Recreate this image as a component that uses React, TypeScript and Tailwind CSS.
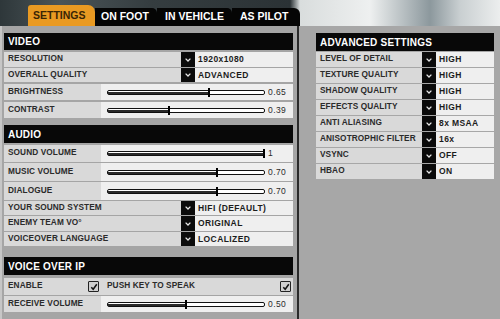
import React, { ReactElement } from 'react'

const labelText = "text-[8.25px] font-bold text-[#2b2b2b] tracking-[0.1px] whitespace-nowrap";
const valueText = "text-[8.5px] font-bold text-[#1c1c1c] tracking-[0.4px] whitespace-nowrap";

const Chevron = (): ReactElement => (
    <div className="flex w-[14px] shrink-0 items-center justify-center self-stretch bg-[#0b0b0b]">
        <svg width="6" height="4" viewBox="0 0 6 4">
            <path d="M0.6 0.6 L3 3 L5.4 0.6" fill="none" stroke="#e6e6e6" strokeWidth="1.3" />
        </svg>
    </div>
)

const Header = ({ title, h }: { title: string; h: string }): ReactElement => (
    <div className={`flex items-center bg-[#080808] pl-[4px] text-[10px] font-bold tracking-[0.2px] text-white ${h}`}>
        {title}
    </div>
)

interface SelectRowProps {
    label: string;
    value: string;
    h: string;
    labelW: string;
}

const SelectRow = ({ label, value, h, labelW }: SelectRowProps): ReactElement => (
    <div className={`flex ${h}`}>
        <div className={`flex items-center bg-[#d9d9d9] pl-[4px] ${labelW} ${labelText}`}>{label}</div>
        <Chevron />
        <div className={`flex flex-1 items-center bg-[#efefef] pl-[3px] ${valueText}`}>{value}</div>
    </div>
)

const SliderRow = ({ label, value, h }: { label: string; value: number; h: string }): ReactElement => {
    const pos = Math.round(value * 156);
    return (
        <div className={`flex ${h}`}>
            <div className={`flex w-[97px] items-center bg-[#d9d9d9] pl-[4px] ${labelText}`}>{label}</div>
            <div className="flex flex-1 items-center bg-[#efefef] pl-[6px]">
                {/* track */}
                <div className="relative h-[5px] w-[158px] rounded-[2px] border border-[#111] bg-white">
                    <div className="absolute left-0 top-[1px] h-[2px] bg-[#2a2a2a]" style={{ width: pos }} />
                    <div className="absolute top-[-3px] h-[9px] w-[2px] bg-black" style={{ left: pos - 1 }} />
                </div>
                <span className="ml-[3px] whitespace-nowrap text-[8.5px] tracking-[0.4px] text-[#2a2a2a]">
                    {value === 1 ? '1' : value.toFixed(2)}
                </span>
            </div>
        </div>
    )
}

const CheckBox = (): ReactElement => (
    <div className="flex h-[11px] w-[11px] items-center justify-center rounded-[1px] border border-[#222] bg-[#cfcfcf]">
        <svg width="8" height="8" viewBox="0 0 8 8">
            <path d="M1.3 4.2 L3.2 6.3 L6.8 1.2" fill="none" stroke="#111" strokeWidth="1.5" />
        </svg>
    </div>
)

const advanced: [string, string][] = [
    ['LEVEL OF DETAIL', 'HIGH'],
    ['TEXTURE QUALITY', 'HIGH'],
    ['SHADOW QUALITY', 'HIGH'],
    ['EFFECTS QUALITY', 'HIGH'],
    ['ANTI ALIASING', '8x MSAA'],
    ['ANISOTROPHIC FILTER', '16x'],
    ['VSYNC', 'OFF'],
    ['HBAO', 'ON'],
];

const App = (): ReactElement => {
    return <div className="relative h-[319px] w-[500px] overflow-hidden bg-[#a3a3a3] font-['Liberation_Sans',Arial,sans-serif]">
        {/* Top tabs */}
        <div className="flex h-[26px] items-end bg-[linear-gradient(90deg,#2e373a_0%,#4a5457_12%,#353d40_30%,#2b3235_58%,#d9dddd_60%,#eef0f0_74%,#8c989d_86%,#c9cfd1_92%,#eceeee_100%)] pl-[28px]">
            <div className="flex h-[21px] w-[67px] items-center rounded-t-[3px] rounded-tr-[7px] bg-[#e99a22] pl-[5px] text-[10.5px] font-bold text-[#3a2505]">
                SETTINGS
            </div>
            <div className="flex h-[18px] w-[62px] items-center rounded-tr-[5px] bg-[#050505] pl-[6px] text-[10.5px] font-bold text-white">
                ON FOOT
            </div>
            <div className="flex h-[18px] w-[75px] items-center rounded-tr-[5px] bg-[#050505] pl-[8px] text-[10.5px] font-bold text-white">
                IN VEHICLE
            </div>
            <div className="flex h-[18px] w-[68px] items-center rounded-tr-[6px] bg-[#050505] pl-[8px] text-[10.5px] font-bold text-white">
                AS PILOT
            </div>
        </div>

        <div className="flex h-[293px]">
            {/* Left panel */}
            <div className="flex w-[299px] flex-col border-l-[2px] border-r-[2px] border-l-[#c6c6c6] border-r-[#2a2a2a] bg-[#a5a5a5] pl-[2px] pr-[4px] pt-[7px]">
                {/* Video */}
                <Header title="VIDEO" h="h-[17px]" />
                <div className="mt-[2px] flex flex-col">
                    <SelectRow label="RESOLUTION" value="1920x1080" h="h-[15px]" labelW="w-[177px]" />
                    <div className="mt-[1px]">
                        <SelectRow label="OVERALL QUALITY" value="ADVANCED" h="h-[14px]" labelW="w-[177px]" />
                    </div>
                    <div className="mt-[2px]">
                        <SliderRow label="BRIGHTNESS" value={0.65} h="h-[16px]" />
                    </div>
                    <div className="mt-[2px]">
                        <SliderRow label="CONTRAST" value={0.39} h="h-[16px]" />
                    </div>
                </div>

                {/* Audio */}
                <div className="mt-[7px]">
                    <Header title="AUDIO" h="h-[18px]" />
                </div>
                <div className="mt-[2px] flex flex-col gap-[1px]">
                    <SliderRow label="SOUND VOLUME" value={1} h="h-[17px]" />
                    <SliderRow label="MUSIC VOLUME" value={0.7} h="h-[18px]" />
                    <SliderRow label="DIALOGUE" value={0.7} h="h-[18px]" />
                    <SelectRow label="YOUR SOUND SYSTEM" value="HIFI (DEFAULT)" h="h-[14px]" labelW="w-[177px]" />
                    <SelectRow label="ENEMY TEAM VO°" value="ORIGINAL" h="h-[15px]" labelW="w-[177px]" />
                    <SelectRow label="VOICEOVER LANGUAGE" value="LOCALIZED" h="h-[14px]" labelW="w-[177px]" />
                </div>

                {/* Voice over IP */}
                <div className="mt-[11px]">
                    <Header title="VOICE OVER IP" h="h-[18px]" />
                </div>
                <div className="mt-[3px] flex h-[17px] bg-[#d9d9d9]">
                    <div className={`flex w-[97px] items-center justify-between pl-[4px] pr-[2px] ${labelText}`}>
                        ENABLE
                        <CheckBox />
                    </div>
                    <div className={`flex flex-1 items-center justify-between pl-[6px] pr-[2px] ${labelText}`}>
                        PUSH KEY TO SPEAK
                        <CheckBox />
                    </div>
                </div>
                <div className="mt-[1px]">
                    <SliderRow label="RECEIVE VOLUME" value={0.5} h="h-[16px]" />
                </div>
            </div>

            {/* Right panel */}
            <div className="flex flex-1 flex-col bg-[#a7a7a7] pl-[17px] pt-[7px]">
                <div className="w-[178px]">
                    <Header title="ADVANCED SETTINGS" h="h-[18px]" />
                    <div className="mt-[1px] flex flex-col gap-[1px]">
                        {advanced.map(([label, value]) => (
                            <SelectRow key={label} label={label} value={value} h="h-[15px]" labelW="w-[106px]" />
                        ))}
                    </div>
                </div>
            </div>
        </div>
    </div>
}

export default App;
